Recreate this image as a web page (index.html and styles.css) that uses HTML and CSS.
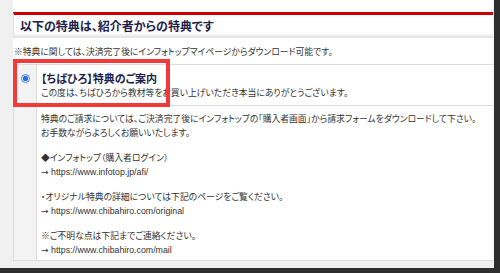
FILE: index.html
```html
<!DOCTYPE html>
<html lang="ja">
  <head>
    <meta charset="UTF-8" />
    <title>紹介者からの特典</title>
    <link rel="stylesheet" href="styles.css">
  </head>
  <body>
    <div class="frame">
      <div class="panel">
        <div class="bonus-heading">以下の特典は、紹介者からの特典です</div>
        <p class="bonus-note">※特典に関しては、決済完了後にインフォトップマイページからダウンロード可能です。</p>

        <div class="bonus-table">
          <div class="bonus-row">
            <div class="radio-cell"><span class="radio"></span></div>
            <div class="content-cell">
              <div class="bonus-title">【ちばひろ】特典のご案内</div>
              <div>この度は、ちばひろから教材等をお買い上げいただき本当にありがとうございます。</div>
            </div>
          </div>
          <div class="bonus-row">
            <div class="radio-cell"></div>
            <div class="content-cell detail">
              <p>特典のご請求については、ご決済完了後にインフォトップの「購入者画面」から請求フォームをダウンロードして下さい。<br>お手数ながらよろしくお願いいたします。</p>
              <p>◆インフォトップ（購入者ログイン）<span class="url"><span class="arrow">→</span> https://www.infotop.jp/afi/</span></p>
              <p>・オリジナル特典の詳細については下記のページをご覧ください。<span class="url"><span class="arrow">→</span> https://www.chibahiro.com/original</span></p>
              <p>※ご不明な点は下記までご連絡ください。<span class="url"><span class="arrow">→</span> https://www.chibahiro.com/mail</span></p>
            </div>
          </div>
        </div>
      </div>
      <div class="highlight"></div>
    </div>
  </body>
</html>
```

FILE: styles.css
```css
body {
  margin: 0;
  font-family: "Noto Sans CJK JP", "Noto Sans", sans-serif;
  font-feature-settings: "palt";
  color: #333;
  background: #2e2e2e;
}
.frame {
  position: relative;
  width: 494px;
  height: 268px;
  background: #f0f0f0;
  overflow: hidden;
}
.panel {
  margin-left: 13px;
  width: 480px;
  background: #fff;
  padding-top: 12px;
}
.bonus-heading {
  border-top: 3px solid #cc0000;
  border-left: 1px solid #e2e2e2;
  height: 22px;
  line-height: 22px;
  padding-left: 6px;
  font-size: 12px;
  font-weight: bold;
  color: #1e1e4a;
  box-shadow: inset 0 -4px 3px -2px #e4e4e4;
  border-bottom: 1px solid #e6e6e6;
}
.bonus-note {
  margin: 0;
  padding: 7px 0 6px 1px;
  font-size: 8.8px;
  line-height: 13px;
}
.bonus-table {
  border-top: 1px solid #dcdcdc;
  border-bottom: 1px solid #dcdcdc;
  font-size: 8.8px;
  line-height: 14px;
}
.bonus-row {
  display: flex;
}
.bonus-row + .bonus-row {
  border-top: 1px solid #dcdcdc;
}
.radio-cell {
  width: 24px;
  flex-shrink: 0;
  background: #f3f3f3;
  border-left: 1px solid #dcdcdc;
  border-right: 1px solid #dcdcdc;
  display: flex;
  justify-content: center;
  padding-top: 9px;
  box-sizing: border-box;
}
.radio {
  width: 9px;
  height: 9px;
  border-radius: 50%;
  border: 1px solid #3a7de0;
  box-sizing: border-box;
  background: radial-gradient(circle, #2f6fe0 0 2.5px, #fff 3px);
}
.content-cell {
  padding: 6px 4px 5px 4px;
  flex: 1;
  white-space: nowrap;
}
.bonus-title {
  font-size: 11px;
  font-weight: bold;
  color: #1e1e4a;
  line-height: 15px;
}
.detail {
  padding-top: 6px;
  padding-bottom: 3px;
}
.detail p {
  margin: 0 0 11px;
}
.detail p:last-child {
  margin-bottom: 0;
}
.url {
  display: block;
  font-family: "Liberation Sans", sans-serif;
  font-size: 8.8px;
  line-height: 14px;
}
.arrow {
  font-family: "DejaVu Sans", sans-serif;
  font-size: 9px;
}
.highlight {
  position: absolute;
  left: 13px;
  top: 59px;
  width: 149px;
  height: 40px;
  border: 4px solid #f23a3a;
}
```
